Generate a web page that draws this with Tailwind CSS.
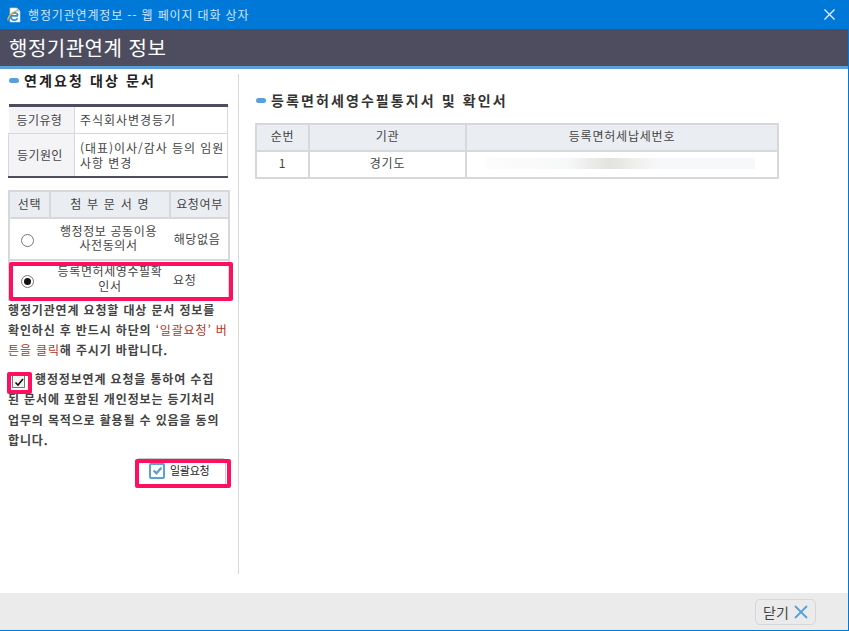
<!DOCTYPE html>
<html lang="ko"><head><meta charset="utf-8">
<script src="https://cdn.jsdelivr.net/npm/@tailwindcss/browser@4"></script>
</head>
<body class="m-0 bg-white">
<div class="relative w-[849px] h-[631px] overflow-hidden flex flex-col bg-white border-r border-b border-[#0078d7] font-['Noto_Sans_CJK_KR','Noto_Sans',sans-serif] text-[#444]">
  <div class="h-[29px] -mr-px bg-[#0078d7] flex items-center pl-[5px] pr-[14px] text-[12px] text-[#cfe4f7] tracking-[0.85px] shrink-0">
    <svg class="w-[17px] h-[18px] mr-[6px]" viewBox="0 0 17 18"><path d="M5 2h7l3 3v11H5z" fill="#fff" stroke="#c8d4dc" stroke-width=".6"/><path d="M12 2v3h3" fill="#bcd" stroke="#8aa" stroke-width=".5"/><path d="M6.5 9.8h6.5M12.6 12.4a3.7 3.7 0 1 1 .4-3" fill="none" stroke="#2a8fd8" stroke-width="1.8"/><path d="M3.2 14.5C2 12 6.5 6 12 4.6" fill="none" stroke="#f0b52c" stroke-width="1.3"/></svg>
    <span>행정기관연계정보 -- 웹 페이지 대화 상자</span>
    <svg class="ml-auto w-[11px] h-[11px]" viewBox="0 0 11 11"><path d="M.5.5l10 10M10.5.5l-10 10" stroke="#fff" stroke-width="1.1"/></svg>
  </div>
  <div class="h-[37px] bg-[#4d4d5f] flex items-center pl-[9px] text-[20px] text-white tracking-[0.5px] shrink-0">행정기관연계 정보</div>
  <div class="h-[3px] bg-[#5b9fd7] shrink-0"></div>

  <div class="flex flex-1 min-h-0">
    <div class="w-[238px] shrink-0 pl-[8px] pr-[8px] pt-[1px]">
      <div class="flex items-center h-[20px] text-[14px] font-bold text-[#222] tracking-[2.1px]"><span class="w-[10px] h-[5px] rounded-full bg-[#5b9fd7] ml-[1px] mr-[5px]"></span>연계요청 대상 문서</div>
      <table class="mt-[14px] w-[220px] border-collapse border-t-[3px] border-b-[2px] border-t-[#4d4d5f] border-b-[#4d4d5f] text-[12px] table-fixed tracking-[0.4px]">
        <tr class="h-[28px]"><td class="w-[66px] bg-[#f4f4f7] border border-[#d8d8dc] border-l-0 pl-[8px]">등기유형</td><td class="border border-[#d8d8dc] pl-[5px] tracking-[0.95px]">주식회사변경등기</td></tr>
        <tr class="h-[43px]"><td class="bg-[#f4f4f7] border border-[#d8d8dc] pl-[8px]">등기원인</td><td class="border border-[#d8d8dc] pl-[5px] leading-[15px] tracking-[0.95px]">(대표)이사/감사 등의 임원 사항 변경</td></tr>
      </table>
      <table class="mt-[12px] w-[222px] border-collapse border-2 border-[#d8d8dc] text-[12px] text-center table-fixed leading-[14px] tracking-[0.6px]">
        <tr class="h-[27px] bg-[#eaeef2]"><td class="w-[41px] border-2 border-[#d8d8dc]"><div class="-mt-[1px]">선택</div></td><td class="border-2 border-[#d8d8dc] tracking-[1.2px]"><div class="-mt-[1px]">첨 부 문 서 명</div></td><td class="w-[59px] border-2 border-[#d8d8dc]"><div class="-mt-[1px]">요청여부</div></td></tr>
        <tr class="h-[42px]"><td class="border-b-2 border-[#d8d8dc] text-left pl-[11px]"><span class="block mt-[3px] w-[13px] h-[13px] rounded-full border border-[#777]"></span></td><td class="border-b-2 border-[#d8d8dc]"><div class="-ml-[3px] -mt-[1px]">행정정보 공동이용<br>사전동의서</div></td><td class="border-b-2 border-[#d8d8dc]"><div class="-ml-[4px]">해당없음</div></td></tr>
        <tr class="h-[40px]"><td class="text-left pl-[11px]"><span class="flex mt-[3px] items-center justify-center w-[13px] h-[13px] rounded-full border border-[#777]"><span class="w-[7px] h-[7px] rounded-full bg-[#111]"></span></span></td><td class="leading-[15px]"><div class="-ml-[3px] -mr-[3px] pb-[4px]">등록면허세영수필확<br>인서</div></td><td class="text-left pl-[3px]">요청</td></tr>
      </table>
      <p class="-mt-[1px] -mr-[6px] text-[12px] font-bold leading-[20px] tracking-[0.85px] text-[#444]">행정기관연계 요청할 대상 문서 정보를<br>확인하신 후 반드시 하단의 <span class="font-normal text-[#b8321c]">‘일괄요청’ 버<br>튼을 클릭</span>해 주시기 바랍니다.</p>
      <p class="mt-[9px] -mr-[6px] text-[12px] font-bold leading-[20.5px] tracking-[0.85px] text-[#444]"><span class="inline-flex align-[-3px] items-center justify-center w-[13px] h-[13px] ml-[4px] mr-[10px] border border-[#777] bg-[#f4f4f4]"><svg class="w-[10px] h-[10px]" viewBox="0 0 10 10"><path d="M1.5 5.5l2.5 2.5 5-6" fill="none" stroke="#111" stroke-width="1.6"/></svg></span>행정정보연계 요청을 통하여 수집<br>된 문서에 포함된 개인정보는 등기처리<br>업무의 목적으로 활용될 수 있음을 동의<br>합니다.</p>
      <div class="mt-[7px] ml-[128px] w-[90px] h-[27px] rounded-t border-t border-r border-[#ccc] flex items-start pl-[13px] text-[11px] text-[#222] tracking-[-0.3px] gap-[5px]">
        <span class="w-[16px] h-[16px] mt-[4px] rounded-[2px] border-2 border-[#5b9fd7] flex items-center justify-center"><svg class="w-[11px] h-[11px]" viewBox="0 0 10 10"><path d="M1.5 5l2.5 2.5 4.5-5" fill="none" stroke="#5b9fd7" stroke-width="2.1"/></svg></span><span class="mt-[3px]">일괄요청</span>
      </div>
    </div>
    <div class="w-px h-[500px] mt-[5px] bg-[#d8d8dc] shrink-0"></div>
    <div class="flex-1 pl-[16px] pt-[20px]">
      <div class="flex items-center h-[22px] text-[14px] font-bold text-[#333] tracking-[2.1px]"><span class="w-[10px] h-[5px] rounded-full bg-[#5b9fd7] mr-[5px] ml-[1px]"></span>등록면허세영수필통지서 및 확인서</div>
      <table class="mt-[12px] w-[524px] border-collapse border-2 border-t-1 border-[#d8d8dc] text-[12px] text-center table-fixed tracking-[0.8px]">
        <tr class="h-[27px] bg-[#eaeef2]"><td class="w-[53px] border-2 border-[#d8d8dc] pb-[3px]">순번</td><td class="w-[157px] border-2 border-[#d8d8dc] pb-[3px]">기관</td><td class="border-2 border-[#d8d8dc] pb-[3px]">등록면허세납세번호</td></tr>
        <tr class="h-[27px]"><td class="border-r-2 border-[#d8d8dc] pb-[3px]">1</td><td class="border-r-2 border-[#d8d8dc] pb-[3px]">경기도</td><td><div class="ml-[19px] w-[269px] h-[11px] -mt-[2px] bg-[linear-gradient(90deg,#fcfcfc_0%,#f7f8f9_30%,#e2e2de_46%,#eeeeec_55%,#f7f8f9_65%,#f7f8f9_100%)]"></div></td></tr>
      </table>
    </div>
  </div>

  <div class="h-[37px] bg-[#ebebeb] flex items-start justify-end pr-[32px] pt-[6px] shrink-0">
    <button class="w-[61px] h-[26px] flex items-center justify-center gap-[5px] rounded-[5px] border border-[#d6d6d6] text-[14px] text-[#444]">닫기<svg class="w-[14px] h-[14px]" viewBox="0 0 14 14"><path d="M1 1l12 12M13 1L1 13" stroke="#5b9fd7" stroke-width="1.8"/></svg></button>
  </div>

  <div class="absolute left-[9px] top-[262px] w-[224px] h-[39px] border-[4px] border-[#ff0f5f] rounded-[2px]"></div>
  <div class="absolute left-[7px] top-[372px] w-[25px] h-[22px] border-[4px] border-[#ff0f5f] rounded-[2px]"></div>
  <div class="absolute left-[135px] top-[459px] w-[96px] h-[29px] border-[4px] border-[#ff0f5f] rounded-[2px]"></div>
</div>
</body></html>
